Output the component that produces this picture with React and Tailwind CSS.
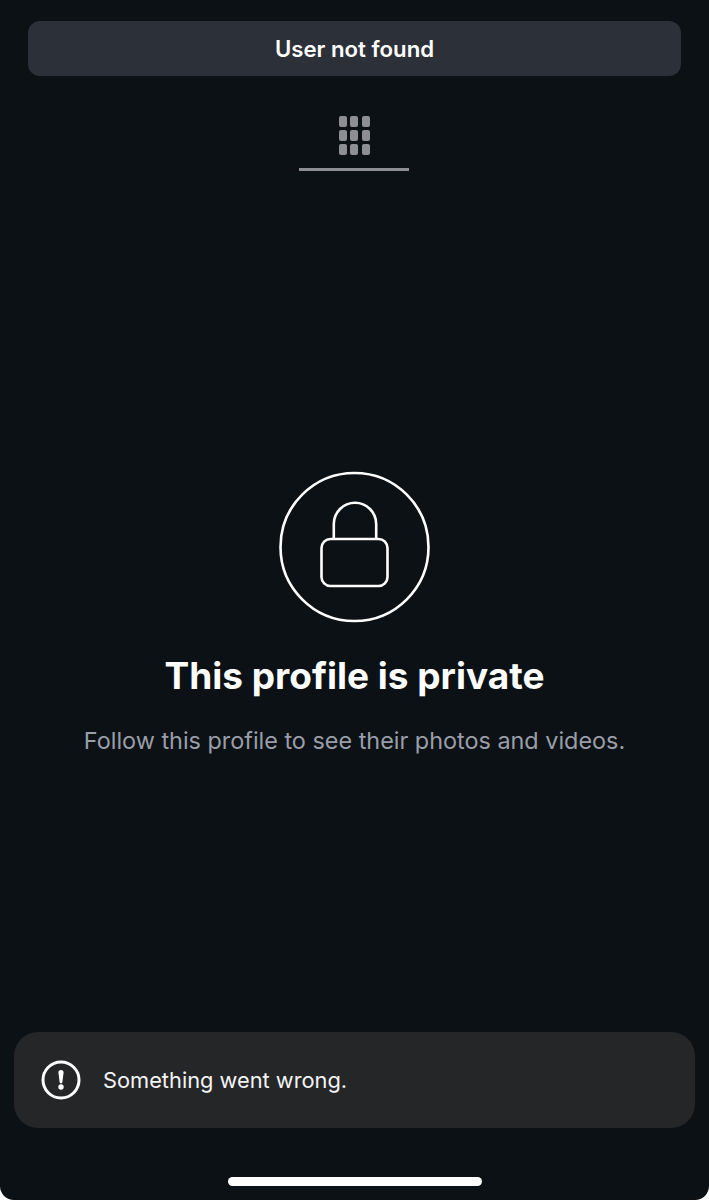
const sans = "font-['Inter','Roboto',sans-serif]";

function GridIcon() {
  const cells = Array.from({ length: 9 });
  return (
    <div className="ml-[1px] grid w-[32px] grid-cols-3 gap-x-[3px] gap-y-[3px]">
      {cells.map((_, i) => (
        <span key={i} className="h-[11px] w-[8px] rounded-[2px] bg-[#8e8f92]" />
      ))}
    </div>
  );
}

function LockIcon() {
  return (
    <svg width="152" height="152" viewBox="0 0 152 152" fill="none" stroke="#fff" strokeWidth="2.6">
      <circle cx="75.5" cy="76" r="74" />
      <path d="M54.8 68V53a21.2 21.2 0 0 1 42.4 0V68" />
      <rect x="42.5" y="68" width="66" height="47" rx="9" />
    </svg>
  );
}

function AlertIcon() {
  return (
    <svg width="40" height="40" viewBox="0 0 40 40" fill="none">
      <circle cx="20" cy="20" r="18" stroke="#fff" strokeWidth="3" />
      <path d="M17.4 12.5a2.6 2.6 0 0 1 5.2 0L21.4 22a1.4 1.4 0 0 1-2.8 0Z" fill="#fff" />
      <circle cx="20" cy="27" r="2.7" fill="#fff" />
    </svg>
  );
}

export default function App() {
  return (
    <div className="h-[1200px] w-[709px] bg-white">
      <div className={`flex h-full flex-col overflow-hidden rounded-b-[14px] bg-[#0b1115] ${sans}`}>
        <div className="px-[28px] pt-[21px]">
          <div className="flex h-[55px] items-center justify-center rounded-[12px] bg-[#2c3038] text-[22.2px] font-semibold text-white">
            User not found
          </div>
        </div>

        <div className="flex justify-center pt-[40px] pr-[1px]">
          <div className="flex w-[110px] flex-col items-center border-b-[3px] border-[#8e8f92] pb-[13px]">
            <GridIcon />
          </div>
        </div>

        <div className="flex flex-col items-center pt-[300px]">
          <LockIcon />
          <h1 className="mt-[26px] text-[37px] leading-[54px] font-bold text-white">This profile is private</h1>
          <p className="mt-[22px] text-[23.4px] leading-[32px] text-[#9a9ea8]">Follow this profile to see their photos and videos.</p>
        </div>

        <div className="mt-auto px-[14px]">
          <div className="flex h-[96px] items-center gap-[22px] rounded-[24px] bg-[#252628] pl-[27px] text-[21.8px] text-[#f4f4f5]">
            <AlertIcon />
            <span>Something went wrong.</span>
          </div>
        </div>

        <div className="flex justify-center pt-[49px] pb-[14px]">
          <div className="h-[9px] w-[254px] rounded-full bg-white" />
        </div>
      </div>
    </div>
  );
}
